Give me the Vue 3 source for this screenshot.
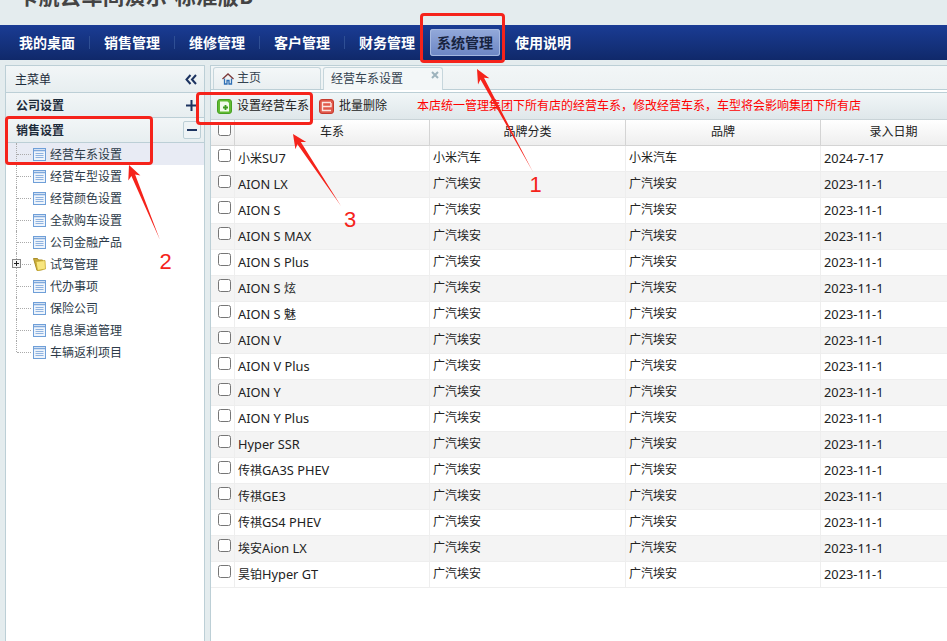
<script setup>
const navItems = ['我的桌面', '销售管理', '维修管理', '客户管理', '财务管理', '系统管理', '使用说明']
const treeItems = ['经营车系设置', '经营车型设置', '经营颜色设置', '全款购车设置', '公司金融产品', '试驾管理', '代办事项', '保险公司', '信息渠道管理', '车辆返利项目']
const rows = [
  ['小米SU7', '小米汽车', '小米汽车', '2024-7-17'],
  ...['AION LX', 'AION S', 'AION S MAX', 'AION S Plus', 'AION S 炫', 'AION S 魅', 'AION V', 'AION V Plus', 'AION Y', 'AION Y Plus', 'Hyper SSR', '传祺GA3S PHEV', '传祺GE3', '传祺GS4 PHEV', '埃安Aion LX', '昊铂Hyper GT']
    .map((n) => [n, '广汽埃安', '广汽埃安', '2023-11-1'])
]
// Latin runs are set slightly larger than the CJK runs, as in the original font.
function segments(text) {
  return text.match(/[\x20-\x7e]+|[^\x20-\x7e]+/g).map((t) => ({ t, lat: /^[\x20-\x7e]/.test(t) }))
}
const boxes = [
  { x: 421.5, y: 14.5, w: 82, h: 47 },
  { x: 6.5, y: 117.5, w: 145, h: 46 },
  { x: 197.5, y: 93.5, w: 114, h: 30 }
]
function arrow(x0, y0, x1, y1) {
  const d = Math.hypot(x1 - x0, y1 - y0)
  const ux = (x1 - x0) / d
  const uy = (y1 - y0) / d
  const nx = -uy
  const ny = ux
  const at = (back, side) => `${(x1 - ux * back + nx * side).toFixed(1)},${(y1 - uy * back + ny * side).toFixed(1)}`
  return [`${x0},${y0}`, at(11, 2), at(14, 6.5), `${x1},${y1}`, at(14, -6.5), at(11, -2)].join(' ')
}
const arrows = [arrow(533, 172, 477, 69), arrow(160, 240, 129, 165), arrow(341, 206, 293, 134)]
const labels = [
  { t: '1', x: 535.5, y: 192 },
  { t: '2', x: 165.5, y: 269 },
  { t: '3', x: 350, y: 227 }
]
</script>

<template>
  <div class="page">
    <header class="top"><h1 class="title">卡航云车间演示-标准版B</h1></header>
    <nav class="nav">
      <a v-for="(n, i) in navItems" :key="n" class="nav-item" :class="{ on: i === 5, sep: i < 4 }">{{ n }}</a>
    </nav>
    <main class="main">
      <aside class="side">
        <div class="side-head">
          <span class="lbl">主菜单</span>
          <svg width="12" height="11" viewBox="0 0 12 11"><path d="M5.500 1 1.500 5.500 5.500 10M11 1 7 5.500 11 10" fill="none" stroke="#1c3360" stroke-width="2"/></svg>
        </div>
        <div class="acc">
          <span class="lbl">公司设置</span>
          <svg class="acc-plus" width="11" height="11" viewBox="0 0 11 11"><path d="M5.500 0v11M0 5.500h11" stroke="#1c3360" stroke-width="2"/></svg>
        </div>
        <div class="acc">
          <span class="lbl">销售设置</span>
          <span class="minus"><svg width="10" height="2" viewBox="0 0 10 2"><path d="M0 1h10" stroke="#1c3360" stroke-width="2"/></svg></span>
        </div>
        <ul class="tree">
          <li v-for="(t, i) in treeItems" :key="t" class="node" :class="{ sel: i === 0, last: i === treeItems.length - 1 }">
            <svg v-if="i === 5" class="expander" width="9" height="9" viewBox="0 0 9 9"><rect x=".5" y=".5" width="8" height="8" fill="#f4f4f4" stroke="#888"/><path d="M2 4.500h5M4.500 2v5" stroke="#222"/></svg>
            <svg v-if="i === 5" class="ico" width="13" height="14" viewBox="0 0 13 14"><path d="M.5 1.500h4l1 1.500h4l.5 9.500-6 1z" fill="#c9a93a" stroke="#a98f2a"/><path d="M3 4.500l9-1 .5 8.500-8 1.500z" fill="#f8e67e" stroke="#c6a92f" stroke-width=".8"/></svg>
            <svg v-else class="ico" width="13" height="13" viewBox="0 0 13 13"><rect x=".5" y=".5" width="12" height="12" fill="#eef4fb" stroke="#6f9fd8"/><path d="M1 2.500h11" stroke="#7fa9dc" stroke-width="1.500"/><path d="M2.500 5.500h8M2.500 7.500h8M2.500 9.500h8" stroke="#8fb3e0"/></svg>
            <span class="lbl">{{ t }}</span>
          </li>
        </ul>
      </aside>
      <section class="content">
        <div class="tabs">
          <div class="tab">
            <svg width="12" height="12" viewBox="0 0 12 12"><path d="M.5 6 6 1l5.500 5" fill="none" stroke="#7d3a3a" stroke-width="1.300"/><path d="M2.500 5.500V11h2.500V7.500h2V11h2.500V5.500" fill="none" stroke="#2e6fb5" stroke-width="1.300"/></svg>
            <span>主页</span>
          </div>
          <div class="tab active">
            <span>经营车系设置</span>
            <svg class="close" width="8" height="8" viewBox="0 0 8 8"><path d="M1 1l6 6M7 1 1 7" stroke="#9db3bd" stroke-width="2"/></svg>
          </div>
        </div>
        <div class="bar">
          <a class="btn">
            <svg width="15" height="15" viewBox="0 0 15 15"><rect x=".5" y=".5" width="14" height="14" rx="2.500" fill="#62bb33" stroke="#46a024"/><path d="M3 2.500h7.500l1.500 1.500v8.500H3z" fill="#f2fbeb"/><path d="M8.500 6v5M6 8.500h5" stroke="#3f9a1f" stroke-width="1.800"/></svg>
            <span>设置经营车系</span>
          </a>
          <a class="btn del">
            <svg width="15" height="15" viewBox="0 0 15 15"><rect x=".5" y=".5" width="14" height="14" rx="2.500" fill="#e0584a" stroke="#c53b2e"/><path d="M12 3.500H3.500v8H12M3.500 7.500H12V4" fill="none" stroke="#fbe6e2" stroke-width="1.400"/></svg>
            <span>批量删除</span>
          </a>
          <span class="notice">本店统一管理集团下所有店的经营车系，修改经营车系，车型将会影响集团下所有店</span>
        </div>
        <table class="grid">
          <colgroup><col class="c0"><col class="c1"><col class="c2"><col class="c3"><col class="c4"></colgroup>
          <thead>
            <tr>
              <th class="chk"><input type="checkbox"></th>
              <th>车系</th><th>品牌分类</th><th>品牌</th><th>录入日期</th>
            </tr>
          </thead>
          <tbody>
            <tr v-for="r in rows" :key="r[0]">
              <td class="chk"><input type="checkbox"></td>
              <td v-for="(c, j) in r" :key="j"><span v-for="(s, k) in segments(c)" :key="k" :class="{ lat: s.lat }">{{ s.t }}</span></td>
            </tr>
          </tbody>
        </table>
      </section>
    </main>
    <svg class="marks" width="947" height="641" viewBox="0 0 947 641">
      <rect v-for="(b, i) in boxes" :key="i" :x="b.x" :y="b.y" :width="b.w" :height="b.h" rx="2.500" fill="none" stroke="#f5231b" stroke-width="3"/>
      <polygon v-for="(p, i) in arrows" :key="i" :points="p" fill="#f5231b"/>
      <text v-for="l in labels" :key="l.t" :x="l.x" :y="l.y" class="mark-label">{{ l.t }}</text>
    </svg>
  </div>
</template>

<style>
html, body { margin: 0; background: #e4ecee; overflow: hidden; }
</style>

<style scoped>
.page {
  position: relative;
  width: 947px;
  height: 641px;
  overflow: hidden;
  display: flex;
  flex-direction: column;
  background: #e4ecee;
  font: 12px/1.2 "Noto Sans", "Noto Sans CJK SC", sans-serif;
  color: #222;
}
.top { height: 25px; overflow: hidden; flex: none; padding-left: 17px; }
.title { margin: -17px 0 0; font-size: 21px; letter-spacing: .5px; line-height: 26px; font-weight: 700; color: #444; white-space: nowrap; }
.nav {
  height: 35px;
  flex: none;
  display: flex;
  align-items: center;
  gap: 1px;
  padding-left: 5px;
  background: linear-gradient(#1a3c94, #10296a);
}
.nav-item {
  position: relative;
  padding: 0 14px;
  height: 27px;
  line-height: 27px;
  font-size: 14px;
  font-weight: 700;
  color: #fff;
  white-space: nowrap;
}
.nav-item.sep::after {
  content: "";
  position: absolute;
  right: -1px;
  top: 7px;
  height: 13px;
  width: 1px;
  background: #2f4f94;
}
.nav-item.on {
  padding: 0 7px;
  color: #17233f;
  border-radius: 3px;
  background: linear-gradient(#93a9da, #6c86c4);
  box-shadow: inset 0 0 0 1px #a5b8e0;
}
.main { flex: 1; min-height: 0; display: flex; gap: 5px; padding: 5px 0 0 5px; }
.side {
  width: 200px;
  box-sizing: border-box;
  flex: none;
  background: #fff;
  border: 1px solid #bccfd6;
  border-bottom: 0;
}
.side-head, .acc {
  display: flex;
  align-items: center;
  justify-content: space-between;
  box-sizing: border-box;
  background: linear-gradient(#f2f6f7, #e7eef0);
  border-bottom: 1px solid #bccfd6;
  color: #1d2b3a;
}
.lbl { padding-top: 2px; }
.side-head { height: 27px; padding: 0 7px 0 9px; }
.acc { height: 25px; padding: 0 7px 0 10px; font-weight: 700; }
.acc:nth-child(3) { padding-right: 3px; }
.acc-plus { flex: none; }
.minus {
  display: flex;
  align-items: center;
  justify-content: center;
  width: 16px;
  height: 16px;
  border: 1px solid #bccfd6;
  border-radius: 2px;
  background: #eef3f5;
}
.tree { list-style: none; margin: 0; padding: 0; }
.node {
  position: relative;
  height: 22px;
  display: flex;
  align-items: center;
  padding-left: 27px;
  gap: 4px;
  color: #2c3a48;
}
.node.sel { background: #e8ebf4; }
.node::before {
  content: "";
  position: absolute;
  left: 10px;
  top: 0;
  bottom: 0;
  border-left: 1px dotted #aaa;
}
.node.last::before { bottom: 11px; }
.node::after {
  content: "";
  position: absolute;
  left: 11px;
  width: 14px;
  top: 11px;
  border-top: 1px dotted #aaa;
}
.ico { position: relative; z-index: 1; flex: none; }
.expander { position: absolute; left: 6px; top: 6px; z-index: 2; }
.content {
  flex: 1;
  min-width: 0;
  overflow: hidden;
  border-left: 1px solid #bccfd6;
  background: #fff;
}
.tabs {
  height: 25px;
  box-sizing: border-box;
  display: flex;
  gap: 2px;
  padding: 1px 0 0 2px;
  background: linear-gradient(#f2f6f7, #edf2f3);
  border-top: 1px solid #bccfd6;
  border-bottom: 1px solid #bccfd6;
}
.tab {
  box-sizing: border-box;
  width: 108px;
  height: 22px;
  display: flex;
  align-items: center;
  gap: 3px;
  padding-left: 8px;
  background: linear-gradient(#f4f7f8, #e9eff1);
  border: 1px solid #c6d6dc;
  border-bottom: 0;
  border-radius: 3px 3px 0 0;
  color: #33424f;
}
.tab.active {
  position: relative;
  width: 120px;
  height: 23px;
  padding-left: 7px;
  background: #f3f7f8;
  z-index: 1;
}
.close { position: absolute; right: 3px; top: 3px; }
.bar {
  margin-top: 2px;
  height: 27px;
  box-sizing: border-box;
  display: flex;
  align-items: center;
  padding-left: 6px;
  background: linear-gradient(#f1f6f7, #dfe7ea);
  border-top: 1px solid #bccfd6;
}
.btn { display: flex; align-items: center; gap: 5px; color: #222; margin-right: 10px; }
.btn.del { margin-right: 30px; }
.notice { color: #f00; white-space: nowrap; }
.grid {
  table-layout: fixed;
  width: 756px;
  border-collapse: separate;
  border-spacing: 0;
  background: #fff;
}
.c0 { width: 24px; }
.c1 { width: 195px; }
.c2 { width: 196px; }
.c3 { width: 195px; }
.c4 { width: 146px; }
.grid th {
  height: 27px;
  padding: 0;
  font-weight: 400;
  color: #222;
  background: linear-gradient(#fff, #eee);
  border-top: 1px solid #c9d3d7;
  border-right: 1px solid #d4d4d4;
  border-bottom: 1px solid #d4d4d4;
  box-sizing: border-box;
}
.grid td {
  height: 26px;
  box-sizing: border-box;
  padding: 0 3px;
  white-space: nowrap;
  border-right: 1px solid #eee;
  border-bottom: 1px solid #eee;
}
.lat { font-size: 12.800px; }
.grid tbody tr:nth-child(even) td { background: #f4f4f4; }
.chk { position: relative; }
.grid td.chk, .grid th.chk { padding: 0; }
.chk input { position: absolute; left: 7px; top: 3px; margin: 0; }
.marks { position: absolute; left: 0; top: 0; pointer-events: none; }
.mark-label { font: 22px "Liberation Sans", sans-serif; fill: #f5231b; text-anchor: middle; }
</style>
